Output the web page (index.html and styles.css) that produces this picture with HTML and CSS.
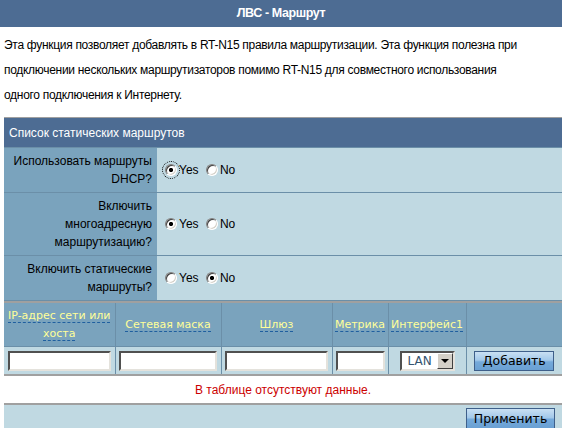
FILE: index.html
```html
<!DOCTYPE html>
<html>
<head>
<meta charset="utf-8">
<title>ЛВС - Маршрут</title>
<link rel="stylesheet" href="styles.css">
</head>
<body>
<div class="title">ЛВС - Маршрут</div>
<p class="desc">Эта функция позволяет добавлять в RT-N15 правила маршрутизации. Эта функция полезна при<br>подключении нескольких маршрутизаторов помимо RT-N15 для совместного использования<br>одного подключения к Интернету.</p>

<table class="opts">
  <colgroup><col class="lc"><col class="rc"></colgroup>
  <tr><th colspan="2" class="sect">Список статических маршрутов</th></tr>
  <tr>
    <th class="lbl">Использовать маршруты<br>DHCP?</th>
    <td class="val"><input type="radio" class="rb focus" name="dhcp" checked>Yes <input type="radio" class="rb" name="dhcp">No</td>
  </tr>
  <tr>
    <th class="lbl">Включить<br>многоадресную<br>маршрутизацию?</th>
    <td class="val"><input type="radio" class="rb" name="mc" checked>Yes <input type="radio" class="rb" name="mc">No</td>
  </tr>
  <tr>
    <th class="lbl">Включить статические<br>маршруты?</th>
    <td class="val"><input type="radio" class="rb" name="st">Yes <input type="radio" class="rb" name="st" checked>No</td>
  </tr>
</table>

<table class="grid">
  <colgroup>
    <col class="c1"><col class="c2"><col class="c3"><col class="c4"><col class="c5"><col class="c6">
  </colgroup>
  <tr class="colh">
    <th><span class="hl">IP-адрес сети или</span><br><span class="hl">хоста</span></th>
    <th><span class="hl">Сетевая маска</span></th>
    <th><span class="hl">Шлюз</span></th>
    <th><span class="hl">Метрика</span></th>
    <th><span class="hl">Интерфейс1</span></th>
    <th></th>
  </tr>
  <tr class="inrow">
    <td><input type="text" class="tx w103"></td>
    <td><input type="text" class="tx w98"></td>
    <td><input type="text" class="tx w103"></td>
    <td><input type="text" class="tx w49"></td>
    <td><span class="sel"><select><option>LAN</option><option>WAN</option></select><span class="arr"></span></span></td>
    <td><button class="btn add">Добавить</button></td>
  </tr>
  <tr class="empty"><td colspan="6">В таблице отсутствуют данные.</td></tr>
  <tr class="apply"><td colspan="6"><button class="btn">Применить</button></td></tr>
</table>
</body>
</html>
```

FILE: styles.css
```css
html, body {
  margin: 0;
  padding: 0;
  background: #ffffff;
}
body {
  font-family: "Liberation Sans", Arial, sans-serif;
  font-size: 12px;
  color: #000;
  overflow: hidden;
}
.title {
  height: 27px;
  line-height: 27px;
  background: #4d6c93;
  color: #fff;
  font-weight: bold;
  font-size: 12.5px;
  letter-spacing: -0.4px;
  text-align: center;
}
.desc {
  margin: 0 0 9px 0;
  padding: 6px 4px 0 4px;
  line-height: 25px;
  font-size: 12px;
  letter-spacing: -0.3px;
}
table {
  border-collapse: collapse;
  border-spacing: 0;
  margin-left: 4px;
  width: 558px;
  table-layout: fixed;
}
th, td {
  padding: 0;
  font-weight: normal;
}
.opts {
  border-top: 1px solid #a0a0a0;
}
.opts .lc { width: 153px; }
.opts .rc { width: 405px; }
.opts .sect {
  height: 29px;
  background: #4d6c93;
  color: #fff;
  text-align: left;
  padding-left: 5px;
  border-bottom: 1px solid #6b8fa8;
}
.opts .lbl {
  background: #7aa3bd;
  text-align: right;
  line-height: 18px;
  padding: 4px 5px 4px 0;
  border-bottom: 1px solid #6b8fa8;
}
.opts .val {
  background: #c0d9e2;
  padding-left: 4px;
  border-bottom: 1px solid #6b8fa8;
  vertical-align: middle;
}
.rb {
  -webkit-appearance: none;
  appearance: none;
  width: 12px;
  height: 12px;
  margin: 0 2px 0 4px;
  vertical-align: -2px;
  border-radius: 50%;
  border: 1px solid;
  border-color: #808080 #ffffff #ffffff #808080;
  box-shadow: inset 1px 1px 0 #404040, inset -1px -1px 0 #d4d0c8;
  background: #fff;
  box-sizing: border-box;
}
.rb:checked {
  background: radial-gradient(circle, #000 0, #000 1.8px, #fff 2.4px);
}
.rb.focus {
  outline: 1px dotted #000;
  outline-offset: 2px;
}
.grid {
  border-top: 2px solid #a0a0a0;
}
.grid .c1 { width: 111px; }
.grid .c2 { width: 106px; }
.grid .c3 { width: 111px; }
.grid .c4 { width: 56px; }
.grid .c5 { width: 78px; }
.grid .c6 { width: 96px; }
.colh th {
  height: 43px;
  background: #7aa3bd;
  text-align: center;
  vertical-align: middle;
  line-height: 18px;
  font-family: "DejaVu Sans", Verdana, sans-serif;
  font-size: 11px;
  border-left: 1px solid #6b8fa8;
  border-bottom: 1px solid #6b8fa8;
}
.colh th:first-child { border-left: none; }
.hl {
  color: #ffff99;
  border-bottom: 1px dashed #1f5f9f;
}
.inrow td {
  height: 27px;
  background: #c0d9e2;
  text-align: center;
  vertical-align: middle;
  border-left: 1px solid #6b8fa8;
}
.inrow td:first-child { border-left: none; }
.tx {
  box-sizing: border-box;
  height: 20px;
  margin: 0;
  padding: 1px 3px;
  border: 2px solid;
  border-color: #505050 #e4e2dc #e4e2dc #505050;
  background: #fff;
  font-family: "DejaVu Sans", Verdana, sans-serif;
  font-size: 11px;
  vertical-align: middle;
}
.w103 { width: 103px; }
.w98 { width: 98px; }
.w49 { width: 49px; }
.sel {
  display: inline-flex;
  box-sizing: border-box;
  width: 55px;
  height: 20px;
  border: 2px solid;
  border-color: #505050 #e4e2dc #e4e2dc #505050;
  background: #fff;
  vertical-align: middle;
}
.sel select {
  -webkit-appearance: none;
  appearance: none;
  flex: 1;
  min-width: 0;
  border: none;
  outline: none;
  margin: 0;
  padding: 0 0 0 6px;
  background: #fff;
  color: #34536f;
  font-family: "DejaVu Sans", Verdana, sans-serif;
  font-size: 12px;
}
.arr {
  width: 16px;
  box-sizing: border-box;
  background: #d4d0c8;
  border: 1px solid;
  border-color: #fff #404040 #404040 #fff;
  display: flex;
  align-items: center;
  justify-content: center;
}
.arr::after {
  content: "";
  width: 0;
  height: 0;
  border-left: 4px solid transparent;
  border-right: 4px solid transparent;
  border-top: 4px solid #000;
}
.btn {
  box-sizing: border-box;
  height: 20px;
  padding: 0 4px;
  margin: 0;
  border: 1px solid #3e5f8a;
  background: linear-gradient(to bottom, #c9e0f3 0%, #a3c9ea 45%, #74a9da 55%, #6aa0d3 100%);
  font-family: "DejaVu Sans", Verdana, sans-serif;
  font-size: 12.5px;
  color: #000;
  vertical-align: middle;
}
.btn.add { width: 80px; }
.empty td {
  height: 27px;
  background: #fff;
  color: #cc0000;
  text-align: center;
  vertical-align: middle;
  border-top: 2px solid #a0a0a0;
}
.apply td {
  height: 26px;
  background: #c0d9e2;
  text-align: right;
  padding-right: 7px;
  border-top: 2px solid #a0a0a0;
  vertical-align: middle;
}
.apply .btn {
  width: 89px;
  height: 21px;
}
```
